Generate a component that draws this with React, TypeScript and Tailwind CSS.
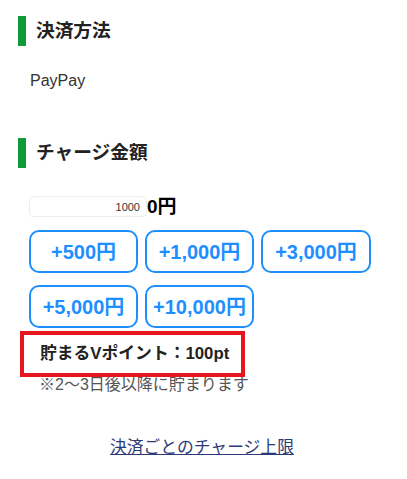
import React from 'react'

const AMOUNTS = ['+500円', '+1,000円', '+3,000円', '+5,000円', '+10,000円']

const FONT = { fontFamily: '"Liberation Sans", "Noto Sans CJK JP", sans-serif' }

function Heading({ children }: { children: React.ReactNode }) {
  return (
    <div className="flex items-center h-[30px] pl-[18px]">
      <span className="w-[8px] h-[30px] bg-[#0f9a3a]" />
      <span className="ml-[10px] text-[18.7px] font-bold text-[#222] leading-none">{children}</span>
    </div>
  )
}

export default function App() {
  return (
    <div className="w-[407px] h-[479px] bg-white overflow-hidden" style={FONT}>
      {/* Payment method */}
      <div className="pt-[16px]">
        <Heading>決済方法</Heading>
        <p className="mt-[25px] pl-[30px] text-[16px] text-[#333] leading-[20px]">PayPay</p>
      </div>

      {/* Charge amount */}
      <div className="mt-[47px]">
        <Heading>チャージ金額</Heading>

        <div className="mt-[28px] pl-[29px] flex items-center">
          <input
            readOnly
            value="1000"
            className="w-[118px] h-[21px] border border-[#ececec] rounded-[4px] text-right pr-[6px] text-[11px] text-[#333] outline-none"
          />
          <span className="text-[19px] font-bold text-black leading-none">0円</span>
        </div>

        <div className="mt-[13px] pl-[29px] grid grid-cols-[109px_109px_110px] gap-x-[7px] gap-y-[12px]">
          {AMOUNTS.map((a) => (
            <button
              key={a}
              className="h-[43px] border-2 border-[#1e8fff] rounded-[10px] text-[20px] font-bold text-[#1e8fff] leading-none whitespace-nowrap"
            >
              {a}
            </button>
          ))}
        </div>

        <div className="mt-[3px] ml-[20px] w-[225px] h-[46px] border-[4px] border-[#e5161e] flex items-center pl-[16px]">
          <span className="text-[16.8px] font-bold text-[#222] leading-none whitespace-nowrap">貯まるVポイント：100pt</span>
        </div>
        <p className="pl-[39px] mt-[-2px] text-[16px] text-[#555] leading-[20px]">※2〜3日後以降に貯まります</p>

        <div className="mt-[41px] pl-[110px]">
          <a href="#" className="text-[16.8px] text-[#2d3a7a] underline leading-[20px]">決済ごとのチャージ上限</a>
        </div>
      </div>
    </div>
  )
}
